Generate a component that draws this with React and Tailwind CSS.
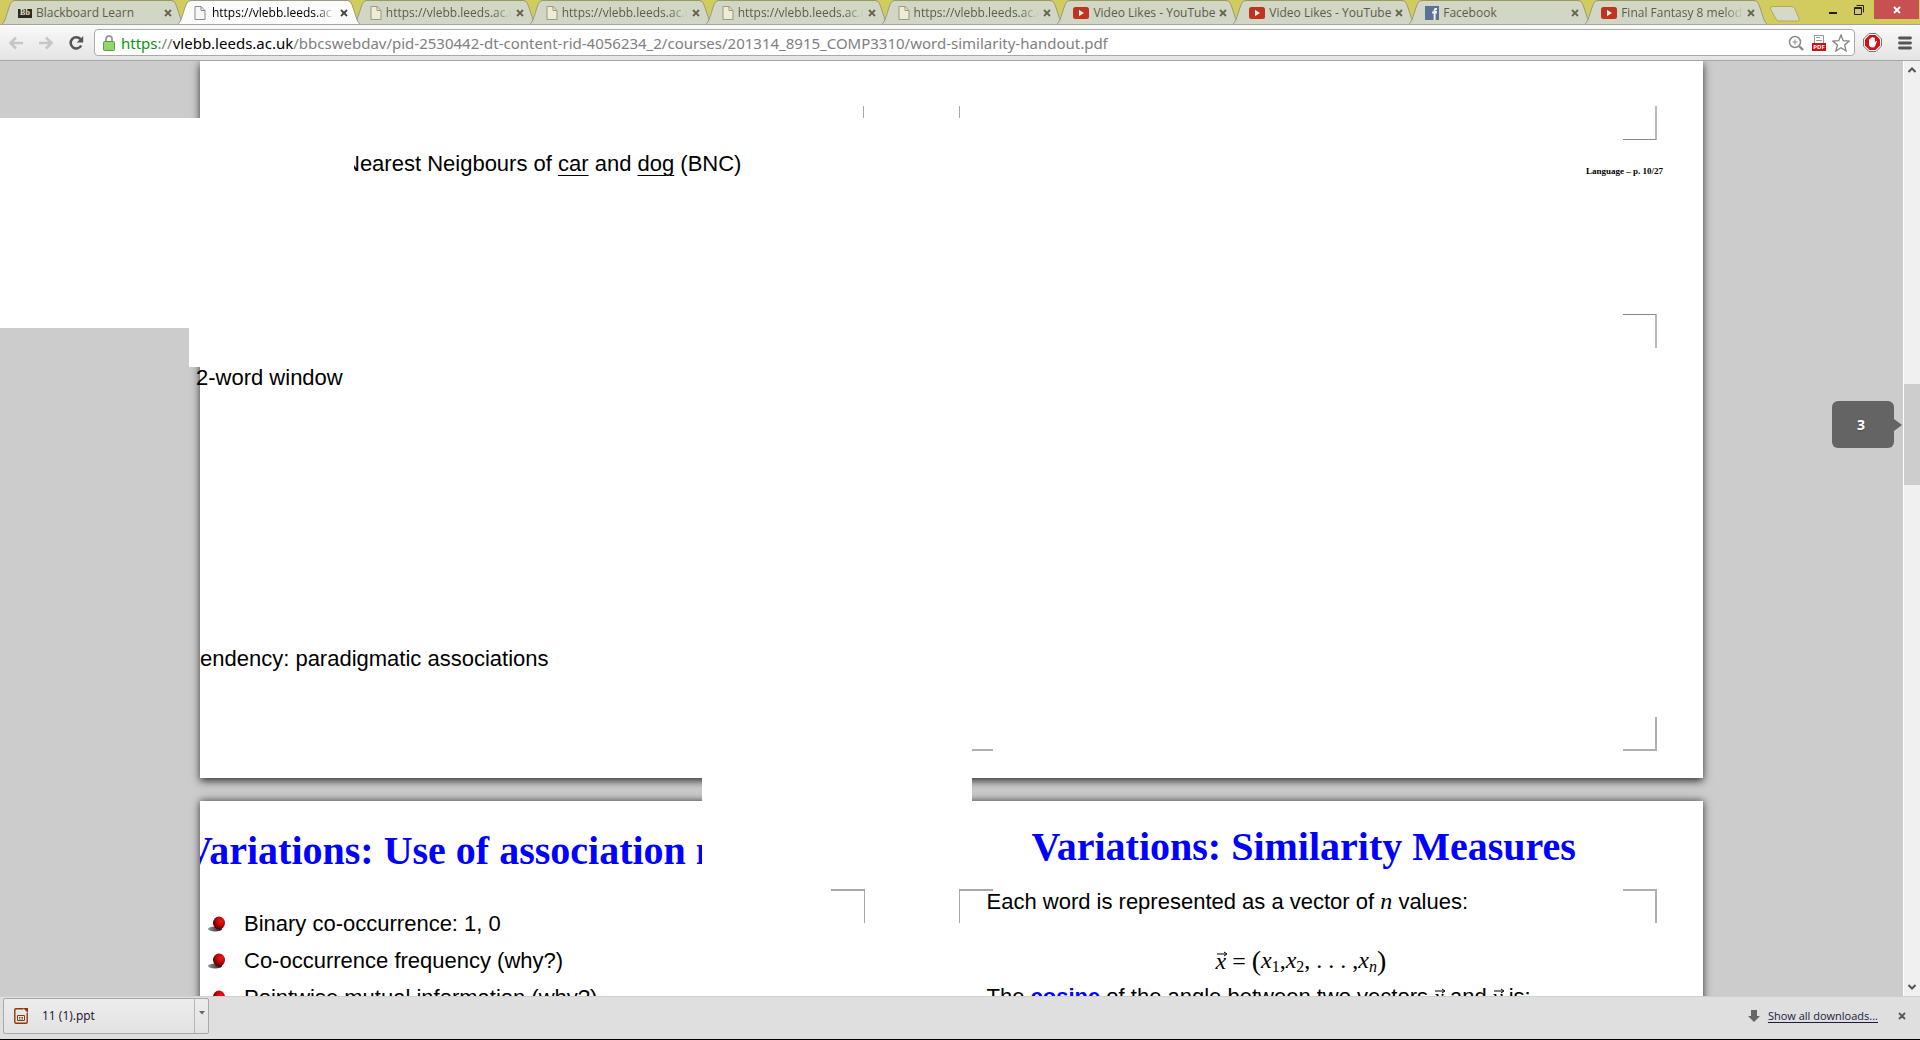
const TABS = [
  { title: "Blackboard Learn", icon: "bb" },
  { title: "https://vlebb.leeds.ac.uk", icon: "page", active: true, long: true },
  { title: "https://vlebb.leeds.ac.uk", icon: "page", long: true },
  { title: "https://vlebb.leeds.ac.uk", icon: "page", long: true },
  { title: "https://vlebb.leeds.ac.uk", icon: "page", long: true },
  { title: "https://vlebb.leeds.ac.uk", icon: "page", long: true },
  { title: "Video Likes - YouTube", icon: "yt" },
  { title: "Video Likes - YouTube", icon: "yt" },
  { title: "Facebook", icon: "fb" },
  { title: "Final Fantasy 8 melodic", icon: "yt", long: true },
];

function TabIcon({ kind, active }) {
  if (kind === "bb")
    return (
      <span className="flex h-[9px] w-3.5 shrink-0 items-center justify-center bg-[#2e2a22] font-['Liberation_Serif',serif] text-[8px] leading-none font-bold text-[#e6e3d0]">
        Bb
      </span>
    );
  if (kind === "yt")
    return (
      <svg className="h-3 w-4 shrink-0" viewBox="0 0 16 12">
        <rect width="16" height="12" rx="2.5" fill="#bf3420" />
        <path d="M6 2.8 11 6 6 9.2z" fill="#f4e6dc" />
      </svg>
    );
  if (kind === "fb")
    return (
      <svg className="h-3.5 w-3.5 shrink-0" viewBox="0 0 14 14">
        <rect width="14" height="14" fill="#5a7196" />
        <path d="M12 3H10.6Q9.6 3 9.6 4.2V6H12M9.6 14V4.2M7 6.6h5" fill="none" stroke="#f0f0e6" strokeWidth="2" />
      </svg>
    );
  return (
    <svg className="h-3.5 w-3 shrink-0" viewBox="0 0 12 14">
      <path d="M1 .5h6l4 4v9H1z" fill={active ? "#f8f8f8" : "#efecd6"} stroke={active ? "#8a8a8a" : "#9a9882"} />
      <path d="M7 .5v4h4" fill="none" stroke={active ? "#8a8a8a" : "#9a9882"} />
    </svg>
  );
}

function Cross({ className }) {
  return (
    <svg className={className} viewBox="0 0 8 8">
      <path d="M1 1l6 6M7 1 1 7" fill="none" stroke="currentColor" strokeWidth="1.8" />
    </svg>
  );
}

function Tab({ title, icon, active, long }) {
  const fill = active ? "#fbfbfb" : "#d2d6c4";
  return (
    <div className={active ? "relative z-10 min-w-0 flex-1" : "relative min-w-0 flex-1"}>
      <div className="absolute inset-y-0 -right-1.5 left-0 flex">
        <svg className="h-full w-3 shrink-0" viewBox="0 0 12 24">
          <path d="M0 24C4 23 7 1 11 1H12V24Z" fill={fill} />
          <path d="M0 24C4 23 7 1 11 1H12" fill="none" stroke="#9a9a86" />
        </svg>
        <div className={active ? "flex-1 border-t border-[#9a9a86] bg-[#fbfbfb]" : "flex-1 border-t border-[#9a9a52] bg-[#d2d6c4]"} />
        <svg className="h-full w-3 shrink-0" viewBox="0 0 12 24">
          <path d="M12 24C8 23 5 1 1 1H0V24Z" fill={fill} />
          <path d="M12 24C8 23 5 1 1 1H0" fill="none" stroke="#9a9a86" />
        </svg>
      </div>
      <div
        className={
          active
            ? "relative flex h-full items-center gap-1.5 pt-0.5 pr-1.5 pl-4 text-black"
            : "relative flex h-full items-center gap-1 pt-0.5 pr-1.5 pl-4 text-[#5d5c4c]"
        }
      >
        <TabIcon kind={icon} active={active} />
        <button
          className={
            long
              ? "min-w-0 flex-1 overflow-hidden mask-r-from-85% text-left text-xs whitespace-nowrap"
              : "min-w-0 flex-1 text-left text-xs whitespace-nowrap"
          }
        >
          {title}
        </button>
        <button aria-label="Close tab" className={active ? "text-[#444]" : "text-[#66664f]"}>
          <Cross className="size-2" />
        </button>
      </div>
    </div>
  );
}

function TabStrip() {
  return (
    <div className="flex h-6 bg-[#d2cb5e]">
      <div className="flex min-w-0 flex-1 pl-0.5">
        {TABS.map((t, i) => (
          <Tab key={i} {...t} />
        ))}
      </div>
      <div className="flex w-[159px] shrink-0 items-start pl-2">
        <button aria-label="New tab" className="mt-1.5">
          <svg className="h-4 w-8" viewBox="0 0 32 16">
            <path d="M3 .5H23Q25 .5 26 3L30 12.5Q31 15 29 15H10Q8 15 7 13L1.5 3Q1 .5 3 .5Z" fill="#d6d9c8" stroke="#b0aa5a" />
          </svg>
        </button>
        <button aria-label="Minimize" className="ml-5 flex h-5 w-6 items-center justify-center">
          <svg className="h-4 w-2" viewBox="0 0 8 16">
            <path d="M0 11h8" stroke="#222" strokeWidth="2" />
          </svg>
        </button>
        <button aria-label="Restore" className="flex h-5 w-7 items-center justify-center">
          <svg className="size-2.5" viewBox="0 0 10 10" fill="none" stroke="#222">
            <path d="M.5 2.5h7v7h-7zM.5 3.5h7M2.5 .5h7v7" />
          </svg>
        </button>
        <button aria-label="Close" className="ml-px flex h-[19px] w-[45px] items-center justify-center bg-[#c75050] text-white">
          <Cross className="size-2" />
        </button>
      </div>
    </div>
  );
}

function Arrow({ flip }) {
  return (
    <svg className={flip ? "h-3.5 w-4 -scale-x-100" : "h-3.5 w-4"} viewBox="0 0 16 14">
      <path d="M15 7H3M8 1.5 2.5 7 8 12.5" fill="none" stroke="#c6c6c6" strokeWidth="2.6" />
    </svg>
  );
}

function Toolbar() {
  return (
    <div className="flex h-[37px] items-center border-t border-b border-t-[#a3a598] border-b-[#a6a6a6] bg-gradient-to-b from-[#fafafa] to-[#e4e4e4] pr-2 pl-2">
      <button aria-label="Back"><Arrow /></button>
      <button aria-label="Forward" className="ml-3.5"><Arrow flip /></button>
      <button aria-label="Reload" className="ml-3.5">
        <svg className="size-4" viewBox="0 0 16 16">
          <path d="M13.2 10.5A5.6 5.6 0 1 1 12.5 4.2" fill="none" stroke="#555" strokeWidth="2.6" />
          <path d="M15.2 1v6.5H8.7z" fill="#555" />
        </svg>
      </button>
      <div className="ml-2.5 flex h-[27px] min-w-0 flex-1 items-center rounded-sm border border-[#a9a9a9] bg-white pr-1 pl-2">
        <svg className="h-4 w-3 shrink-0" viewBox="0 0 12 16">
          <path d="M3 8V4a3 3 0 0 1 6 0v4" fill="none" stroke="#9a9a9a" strokeWidth="1.8" />
          <rect x=".5" y="6.5" width="11" height="9" rx="1" fill="#92d56c" stroke="#5e9a48" />
        </svg>
        <div className="ml-1.5 min-w-0 flex-1 truncate font-['Noto_Sans',sans-serif] text-[15px] leading-6 text-[#808080]">
          <span className="text-[#0b9410]">https</span>://<span className="text-black">vlebb.leeds.ac.uk</span>
          /bbcswebdav/pid-2530442-dt-content-rid-4056234_2/courses/201314_8915_COMP3310/word-similarity-handout.pdf
        </div>
        <button aria-label="Zoom">
          <svg className="size-4" viewBox="0 0 16 16" fill="none" stroke="#8a8a8a">
            <circle cx="7" cy="7" r="5.5" strokeWidth="1.5" />
            <path d="M4.5 7h5M7 4.5v5" />
            <path d="m11 11 4 4" strokeWidth="2.4" />
          </svg>
        </button>
        <button aria-label="PDF" className="ml-2 flex h-4 w-3.5 flex-col items-center">
          <span className="flex h-2 w-2.5 flex-col gap-0.5 border border-b-0 border-[#999] bg-white px-px pt-px">
            <span className="h-px w-1 bg-[#999]" />
            <span className="h-px w-1.5 bg-[#999]" />
          </span>
          <span className="flex h-2 w-3.5 items-center justify-center bg-[#d40f0f] text-[6px] leading-none font-bold text-white">PDF</span>
        </button>
        <button aria-label="Bookmark" className="ml-1.5">
          <svg className="size-[18px]" viewBox="0 0 18 18">
            <path d="M9 1l2.2 5.7 6 .4-4.6 3.9 1.5 6L9 13.7 3.9 17l1.5-6L.8 7.1l6-.4z" fill="#fff" stroke="#858585" strokeWidth="1.3" />
          </svg>
        </button>
      </div>
      <button aria-label="AdBlock" className="ml-2">
        <svg className="size-[19px]" viewBox="0 0 19 19">
          <path d="M6 .5h7L18.5 6v7L13 18.5H6L.5 13V6z" fill="#fff" stroke="#777" />
          <path d="M6.5 2h6L17 6.5v6L12.5 17h-6L2 12.5v-6z" fill="#d90d12" />
          <path d="M6 10V6.5q.8-1 1.4 0V5q.8-1 1.5 0v-.5q.8-1 1.5 0V5q.8-1 1.5 0v4.5l1-1.5q1-.5 1 .4l-1.7 4.5Q11.5 14.5 9.5 14.5 6 14.5 6 11z" fill="#fff" />
        </svg>
      </button>
      <button aria-label="Menu" className="ml-4">
        <svg className="h-3.5 w-3.5" viewBox="0 0 14 14">
          <path d="M1.5 2h11M1.5 7h11M1.5 12h11" stroke="#555" strokeWidth="2.8" strokeLinecap="round" />
        </svg>
      </button>
    </div>
  );
}

function Bullet() {
  return (
    <svg className="h-4 w-[18px] shrink-0" viewBox="0 0 18 16">
      <defs>
        <radialGradient id="ball" cx=".65" cy=".35" r=".65">
          <stop offset="0" stopColor="#f01818" />
          <stop offset=".5" stopColor="#c00808" />
          <stop offset="1" stopColor="#5c0404" />
        </radialGradient>
        <linearGradient id="shade">
          <stop offset="0" stopColor="#999" />
          <stop offset="1" stopColor="#111" />
        </linearGradient>
      </defs>
      <ellipse cx="7" cy="13" rx="7" ry="2.5" fill="url(#shade)" />
      <ellipse cx="11" cy="7" rx="6" ry="6.5" fill="url(#ball)" />
    </svg>
  );
}

const BULLETS = [
  "Binary co-occurrence: 1, 0",
  "Co-occurrence frequency (why?)",
  "Pointwise mutual information (why?)",
];

function Vec({ children }) {
  return (
    <span className="relative font-['Liberation_Serif',serif] italic">
      {children}
      <svg className="absolute top-1 left-0 h-1.5 w-3" viewBox="0 0 12 6">
        <path d="M1 3h9M8 1l3 2-3 2" fill="none" stroke="#000" />
      </svg>
    </span>
  );
}

function PageOne() {
  return (
    <section className="relative mx-auto h-[717px] w-full max-w-[1503px] shrink-0 bg-white shadow-[0_3px_8px_#333]">
      <div className="absolute top-[45px] left-[663px] h-3 w-px bg-[#a8a8a8]" />
      <div className="absolute top-[45px] left-[759px] h-3 w-px bg-[#a8a8a8]" />
      <div className="absolute top-[45px] right-[46px] h-[34px] w-[34px] border-r-2 border-b border-r-[#bbb] border-b-[#888]" />
      <div className="absolute top-[253px] right-[46px] h-[34px] w-[34px] border-t border-r-2 border-t-[#888] border-r-[#bbb]" />
      <div className="absolute right-[46px] bottom-[27px] h-[34px] w-[34px] border-r-2 border-b-2 border-[#b0b0b0]" />
      <div className="absolute bottom-[27px] left-[759px] h-[34px] w-[34px] border-b-2 border-[#b0b0b0]" />
      <div className="flex justify-between pt-[89px] pr-10 pl-36">
        <h2 className="text-[22px] leading-7">
          Nearest Neigbours of <u className="decoration-1 underline-offset-4">car</u> and{" "}
          <u className="decoration-1 underline-offset-4">dog</u> (BNC)
        </h2>
        <p className="pt-3.5 font-['Liberation_Serif',serif] text-[9px] leading-3.5 font-bold">Language – p. 10/27</p>
      </div>
      <p className="-ml-1 pt-[186px] text-[22px] leading-7">2-word window</p>
      <p className="pt-[253px] text-[22px] leading-7">endency: paradigmatic associations</p>
    </section>
  );
}

function PageTwo() {
  return (
    <section className="relative mx-auto mt-[23px] grid h-[717px] w-full max-w-[1503px] shrink-0 grid-cols-2 overflow-hidden bg-white shadow-[0_0_8px_#333]">
      <div className="absolute top-[88px] left-[631px] h-[34px] w-[34px] border-t-2 border-r border-[#a8a8a8]" />
      <div className="absolute top-[88px] left-[759px] h-[34px] w-[34px] border-t-2 border-l border-[#a8a8a8]" />
      <div className="absolute top-[88px] right-[46px] h-[34px] w-[34px] border-t-2 border-r-2 border-[#b0b0b0]" />
      <div className="pt-[26px]">
        <h2 className="-ml-4 w-[518px] overflow-hidden font-['Liberation_Serif',serif] text-[40px] leading-[48px] font-bold whitespace-nowrap text-[#0000ff]">
          Variations: Use of association measures
        </h2>
        <ul className="pt-[30px] pl-2">
          {BULLETS.map((b) => (
            <li key={b} className="flex h-[37px] items-center gap-[18px] text-[22px] leading-7">
              <Bullet />
              {b}
            </li>
          ))}
        </ul>
      </div>
      <div className="pt-[22px] pl-[35px]">
        <h2 className="pl-[45px] font-['Liberation_Serif',serif] text-[40px] leading-[48px] font-bold whitespace-nowrap text-[#0000ff]">
          Variations: Similarity Measures
        </h2>
        <p className="pt-4 text-[22px] leading-7">
          Each word is represented as a vector of <i className="font-['Liberation_Serif',serif] text-2xl leading-7">n</i> values:
        </p>
        <p className="flex items-center pt-[30px] pl-[229px] font-['Liberation_Serif',serif] text-2xl leading-7">
          <Vec>x</Vec>
          <span className="px-1.5">=</span>
          <span className="text-[28px] leading-7">(</span>
          <span>
            <i>x</i><sub className="text-base">1</sub>,<i>x</i>
            <sub className="text-base">2</sub>, . . . ,<i>x</i>
            <sub className="text-base italic">n</sub>
          </span>
          <span className="text-[28px] leading-7">)</span>
        </p>
        <p className="pt-2 text-[22px] leading-7">
          The <b className="text-[#0000ff]">cosine</b> of the angle between two vectors <Vec>x</Vec> and <Vec>y</Vec> is:
        </p>
      </div>
    </section>
  );
}

function Viewer() {
  return (
    <main className="flex min-h-0 flex-1 bg-[#cccccc]">
      <div className="relative flex min-w-0 flex-1 flex-col overflow-hidden">
        <PageOne />
        <PageTwo />
        <div className="absolute top-[57px] left-0 h-[210px] w-[354px] bg-white" />
        <div className="absolute top-[267px] left-[189px] h-[39px] w-4 bg-white" />
        <div className="absolute top-[683px] left-[702px] h-[57px] w-[270px] bg-white" />
        <div className="absolute top-[340px] right-0 flex items-center">
          <span className="flex h-[47px] w-[62px] items-center justify-center rounded-md bg-[#646464] pr-1 font-['Open_Sans',sans-serif] text-sm font-bold text-white text-shadow-sm">3</span>
          <svg className="mr-px h-3 w-2" viewBox="0 0 8 12">
            <path d="M0 0 8 6 0 12z" fill="#646464" />
          </svg>
        </div>
      </div>
      <div className="flex w-[17px] shrink-0 flex-col items-center border-l border-white bg-[#f0f0f0]">
        <svg className="mt-1.5 h-1.5 w-2" viewBox="0 0 8 6"><path d="M.5 5 4 1.5 7.5 5" fill="none" stroke="#555" strokeWidth="2" /></svg>
        <div className="mt-[311px] h-[101px] w-full bg-[#cdcdcd]" />
        <svg className="mt-auto mb-1.5 h-1.5 w-2" viewBox="0 0 8 6"><path d="M.5 1 4 4.5 7.5 1" fill="none" stroke="#555" strokeWidth="2" /></svg>
      </div>
    </main>
  );
}

function Downloads() {
  return (
    <footer className="flex h-11 shrink-0 items-center border-t border-b border-t-[#d0d0d0] border-b-black bg-[#dfdfdf] pr-3.5 pb-1 pl-[3px] text-xs">
      <div className="flex h-9 w-[206px] rounded-xs border border-[#a9a9a9] bg-gradient-to-b from-[#ededed] to-[#e2e2e2]">
        <button className="flex min-w-0 flex-1 items-center gap-3.5 pl-2.5 text-[#210b2c]">
          <svg className="h-4 w-3.5" viewBox="0 0 14 16" fill="none" stroke="#8a3a0c">
            <path d="M9.5 .8H2Q.8.8.8 2v12q0 1.2 1.2 1.2h10q1.2 0 1.2-1.2V5" strokeWidth="1.4" />
            <path d="M9 0h5v5z" fill="#8a3a0c" stroke="none" />
            <path d="M3.5 7.5h7v5h-7zM5 9.5h1.5M7.5 9.5H9M5 11h1.5M7.5 11H9" />
          </svg>
          11 (1).ppt
        </button>
        <button aria-label="Options" className="flex w-3.5 items-start justify-center border-l border-[#b5b5b5] pt-3">
          <svg className="h-1 w-1.5" viewBox="0 0 6 4"><path d="M0 0h6L3 3.5z" fill="#666" /></svg>
        </button>
      </div>
      <svg className="mr-2 ml-auto h-3 w-3" viewBox="0 0 12 12"><path d="M3 0h6v6h3l-6 6-6-6h3z" fill="#666" /></svg>
      <a href="#downloads" className="text-[11px] text-[#1b1b3c] underline underline-offset-2">Show all downloads...</a>
      <button aria-label="Close downloads" className="ml-5 text-[#555]"><Cross className="size-2" /></button>
    </footer>
  );
}

export default function App() {
  return (
    <div className="flex h-screen flex-col overflow-hidden font-['Open_Sans','Noto_Sans',sans-serif]">
      <TabStrip />
      <Toolbar />
      <div className="flex min-h-0 flex-1 flex-col font-['Liberation_Sans',Arial,sans-serif] text-black">
        <Viewer />
      </div>
      <Downloads />
    </div>
  );
}
